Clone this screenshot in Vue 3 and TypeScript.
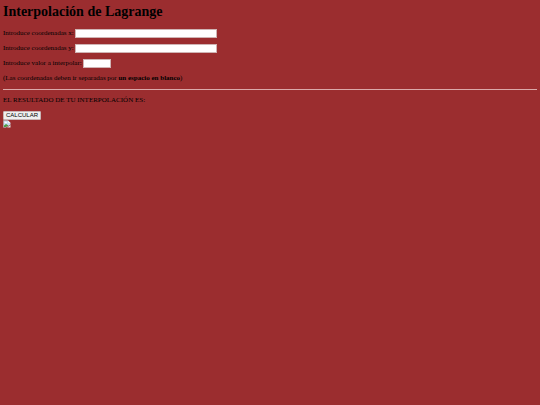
<script setup lang="ts">
import { ref } from 'vue'

const xs = ref('')
const ys = ref('')
const target = ref('')
const result = ref('')

function calculate(): void {
  const px = xs.value.trim().split(/\s+/).map(Number)
  const py = ys.value.trim().split(/\s+/).map(Number)
  const t = Number(target.value)
  const total = py.reduce((sum, y, i) => {
    const basis = px.reduce((acc, x, j) => (i === j ? acc : (acc * (t - x)) / (px[i] - x)), 1)
    return sum + y * basis
  }, 0)
  result.value = String(total)
}
</script>

<template>
  <main class="page">
    <h1>Interpolación de Lagrange</h1>
    <form @submit.prevent="calculate">
      <p class="row">
        <label for="xs">Introduce coordenadas x:</label>
        <input id="xs" v-model="xs" class="wide" type="text" />
      </p>
      <p class="row">
        <label for="ys">Introduce coordenadas y:</label>
        <input id="ys" v-model="ys" class="wide" type="text" />
      </p>
      <p class="row">
        <label for="target">Introduce valor a interpolar:</label>
        <input id="target" v-model="target" class="narrow" type="text" />
      </p>
      <p class="row">
        <span>(Las coordenadas deben ir separadas por <b>un espacio en blanco</b>)</span>
      </p>
      <hr />
      <p class="result">EL RESULTADO DE TU INTERPOLACIÓN ES: {{ result }}</p>
      <button type="submit">CALCULAR</button>
    </form>
    <svg class="broken" viewBox="0 0 16 16" aria-hidden="true">
      <path d="M1 1h9l5 5v3L6 15H1z" fill="#c9dcf2" />
      <path d="M1 15V1h9" fill="none" stroke="#b9b9b9" />
      <path d="M10 1v5h5z" fill="#f4f4f4" />
      <path d="M3 6a2 2 0 0 1 5 0z" fill="#fff" />
      <path d="M2 14v-3l4-3 5 3-5 3z" fill="#4c9a45" />
      <path d="M15 10v5H8z" fill="#dfe6e0" />
    </svg>
  </main>
</template>

<style>
body {
  background: #9b2d2f;
}
</style>

<style scoped>
.page {
  padding: 3px;
  font-family: "Liberation Serif", "Times New Roman", serif;
  font-size: 7px;
  line-height: 8px;
  color: #000;
}
h1 {
  margin: 0 0 8px;
  font-size: 14px;
  line-height: 17px;
}
.row {
  display: flex;
  align-items: center;
  gap: 1px;
  height: 10px;
  margin: 0 0 5px;
}
input {
  box-sizing: border-box;
  height: 9px;
  padding: 0 1px;
  border: 1px solid #cfb4b4;
  background: #fff;
  font-size: 6px;
}
.wide {
  width: 142px;
}
.narrow {
  width: 28px;
}
hr {
  margin: 6px 0;
  border: 0;
  border-top: 1px solid #dba9a9;
}
.result {
  margin: 0 0 7px;
}
button {
  display: block;
  height: 9px;
  padding: 0 2px;
  border: 1px solid #c9b5b5;
  border-radius: 1px;
  background: #efefef;
  color: #000;
  font-family: "Liberation Sans", Arial, sans-serif;
  font-size: 6px;
  line-height: 7px;
}
.broken {
  display: block;
  width: 8px;
  height: 8px;
}
</style>
